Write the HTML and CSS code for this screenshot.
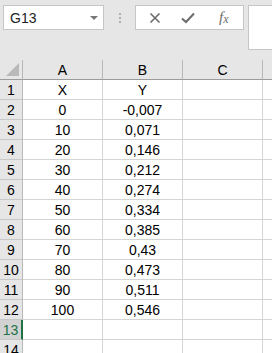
FILE: index.html
```html
<!DOCTYPE html>
<html>
<head>
    <meta charset="UTF-8">
    <link rel="stylesheet" href="styles.css">
</head>
<body>
    <div class="toolbar">
        <div class="namebox">
            <span>G13</span>
            <span class="caret"></span>
        </div>
        <div class="dots"><i></i><i></i><i></i></div>
        <div class="fxbox">
            <svg class="icon" width="12" height="12" viewBox="0 0 12 12"><path d="M1.5 1.5 L10.5 10.5 M10.5 1.5 L1.5 10.5" stroke="#6b6b6b" stroke-width="1.6" fill="none"/></svg>
            <svg class="icon" width="14" height="12" viewBox="0 0 14 12"><path d="M1 6.5 L5 10 L13 1.5" stroke="#6b6b6b" stroke-width="2" fill="none"/></svg>
            <span class="fx">f<span class="x">x</span></span>
        </div>
        <div class="formula"></div>
    </div>

    <div class="sheet">
        <div class="corner"><span class="tri"></span></div>
        <div class="colhead">A</div>
        <div class="colhead">B</div>
        <div class="colhead">C</div>
        <div class="colhead last"></div>

        <div class="rowhead">1</div><div class="cell">X</div><div class="cell">Y</div><div class="cell"></div><div class="cell last"></div>
        <div class="rowhead">2</div><div class="cell">0</div><div class="cell">-0,007</div><div class="cell"></div><div class="cell last"></div>
        <div class="rowhead">3</div><div class="cell">10</div><div class="cell">0,071</div><div class="cell"></div><div class="cell last"></div>
        <div class="rowhead">4</div><div class="cell">20</div><div class="cell">0,146</div><div class="cell"></div><div class="cell last"></div>
        <div class="rowhead">5</div><div class="cell">30</div><div class="cell">0,212</div><div class="cell"></div><div class="cell last"></div>
        <div class="rowhead">6</div><div class="cell">40</div><div class="cell">0,274</div><div class="cell"></div><div class="cell last"></div>
        <div class="rowhead">7</div><div class="cell">50</div><div class="cell">0,334</div><div class="cell"></div><div class="cell last"></div>
        <div class="rowhead">8</div><div class="cell">60</div><div class="cell">0,385</div><div class="cell"></div><div class="cell last"></div>
        <div class="rowhead">9</div><div class="cell">70</div><div class="cell">0,43</div><div class="cell"></div><div class="cell last"></div>
        <div class="rowhead">10</div><div class="cell">80</div><div class="cell">0,473</div><div class="cell"></div><div class="cell last"></div>
        <div class="rowhead">11</div><div class="cell">90</div><div class="cell">0,511</div><div class="cell"></div><div class="cell last"></div>
        <div class="rowhead">12</div><div class="cell">100</div><div class="cell">0,546</div><div class="cell"></div><div class="cell last"></div>
        <div class="rowhead active">13</div><div class="cell"></div><div class="cell"></div><div class="cell"></div><div class="cell last"></div>
        <div class="rowhead">14</div><div class="cell"></div><div class="cell"></div><div class="cell"></div><div class="cell last"></div>
    </div>
</body>
</html>
```

FILE: styles.css
```css
body {
    margin: 0;
    background: #e6e6e6;
    font-family: "Liberation Sans", Arial, sans-serif;
    width: 272px;
    height: 353px;
    overflow: hidden;
}

.toolbar {
    display: flex;
    align-items: flex-start;
    height: 60px;
    padding-top: 5px;
    box-sizing: border-box;
}

.toolbar > div {
    flex-shrink: 0;
}

.namebox {
    margin-left: 3px;
    width: 101px;
    height: 25px;
    box-sizing: border-box;
    background: white;
    border: 1px solid #c6c6c6;
    display: flex;
    align-items: center;
    justify-content: space-between;
    padding: 0 5px 0 6px;
    font-size: 14px;
    color: #222;
}

.caret {
    width: 0;
    height: 0;
    border-left: 4px solid transparent;
    border-right: 4px solid transparent;
    border-top: 4px solid #777;
}

.dots {
    width: 31px;
    height: 25px;
    display: flex;
    flex-direction: column;
    align-items: center;
    justify-content: center;
    gap: 2px;
}

.dots i {
    display: block;
    width: 2px;
    height: 2px;
    background: #b0b0b0;
}

.fxbox {
    width: 109px;
    height: 25px;
    box-sizing: border-box;
    background: white;
    border: 1px solid #c6c6c6;
    display: flex;
    align-items: center;
    padding-left: 13px;
    gap: 20px;
}

.fx {
    font-family: "Liberation Serif", serif;
    font-style: italic;
    font-size: 15px;
    color: #6b6b6b;
    margin-left: 4px;
}

.fx .x {
    font-size: 12px;
    position: relative;
    top: 1px;
}

.formula {
    margin-left: 4px;
    width: 40px;
    height: 45px;
    box-sizing: border-box;
    background: white;
    border: 1px solid #c6c6c6;
    border-right: none;
}

.sheet {
    display: grid;
    grid-template-columns: 23px 80px 80px 80px 40px;
    grid-auto-rows: 20px;
    background: white;
}

.sheet > div {
    box-sizing: border-box;
    display: flex;
    align-items: center;
    justify-content: center;
    font-size: 14px;
    color: #000;
}

.corner {
    background: #e6e6e6;
    border-right: 1px solid #b8b8b8;
    border-bottom: 1px solid #9b9b9b;
    position: relative;
}

.tri {
    position: absolute;
    right: 3px;
    bottom: 3px;
    width: 0;
    height: 0;
    border-left: 13px solid transparent;
    border-bottom: 13px solid #b9b9b9;
}

.colhead {
    background: #e6e6e6;
    border-right: 1px solid #b8b8b8;
    border-bottom: 1px solid #9b9b9b;
    color: #222;
}

.colhead.last,
.cell.last {
    border-right: none;
}

.rowhead {
    background: #e6e6e6;
    border-right: 1px solid #b8b8b8;
    border-bottom: 1px solid #c8c8c8;
    color: #222;
}

.rowhead.active {
    background: #d2d2d2;
    color: #217346;
    border-right: 2px solid #217346;
}

.cell {
    border-right: 1px solid #d4d4d4;
    border-bottom: 1px solid #d4d4d4;
}
```
